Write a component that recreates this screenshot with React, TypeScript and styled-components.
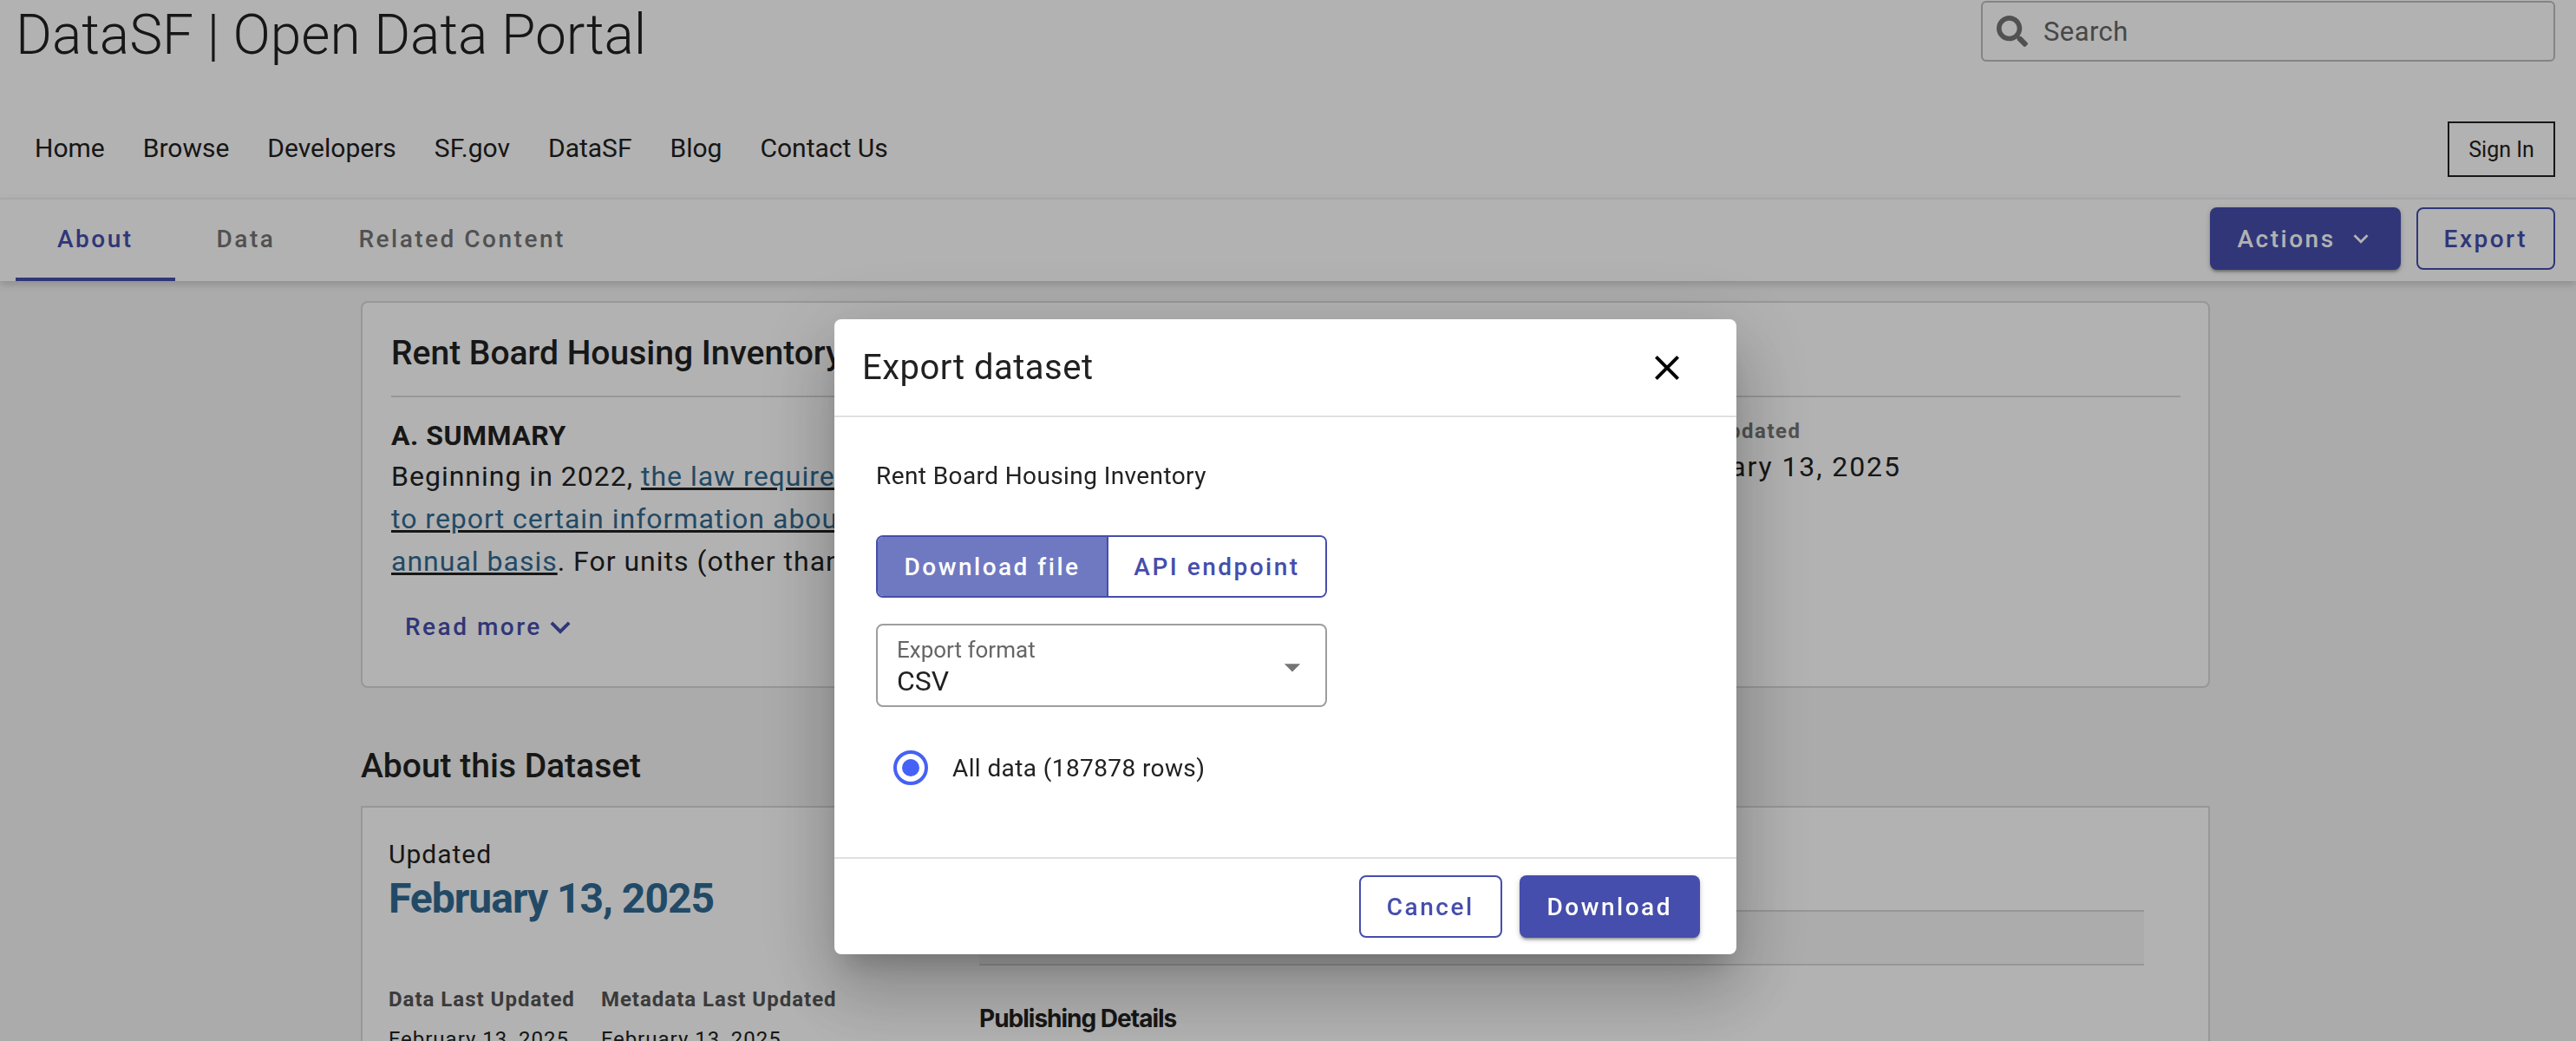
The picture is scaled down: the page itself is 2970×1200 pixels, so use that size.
import React from 'react';
import styled, { createGlobalStyle } from 'styled-components';
import { FaSearch } from 'react-icons/fa';
import { MdArrowDropDown, MdClose, MdExpandMore } from 'react-icons/md';

const GlobalStyle = createGlobalStyle`
  html, body {
    margin: 0;
    height: 1200px;
    overflow: hidden;
    background: #f5f5f5;
    font-family: Roboto, "Liberation Sans", sans-serif;
    color: #212121;
  }
  * { box-sizing: border-box; }
`;

const Page = styled.div`
  width: 2970px;
  height: 1200px;
  overflow: hidden;
`;

const Header = styled.header`
  height: 228px;
  background: #fff;
  padding: 1px 24px 0 18px;
`;

const TitleRow = styled.div`
  display: flex;
  justify-content: space-between;
  height: 137px;
`;

const SiteTitle = styled.h1`
  margin: 0;
  font-size: 64px;
  line-height: 80px;
  font-weight: 300;
  letter-spacing: 0;
`;

const SearchBox = styled.div`
  width: 662px;
  height: 70px;
  border: 2px solid #bdbdbd;
  border-radius: 6px;
  display: flex;
  align-items: center;
  gap: 18px;
  padding: 0 16px;
  font-size: 31px;
  letter-spacing: 0.4px;
  color: #666;
  svg { font-size: 36px; color: #757575; }
`;

const NavRow = styled.div`
  display: flex;
  justify-content: space-between;
  align-items: center;
  height: 64px;
  padding-left: 22px;
`;

const NavList = styled.nav`
  display: flex;
  gap: 44px;
  font-size: 30px;
`;

const SignIn = styled.button`
  width: 124px;
  height: 64px;
  background: transparent;
  border: 2px solid #212121;
  font: 400 25px Roboto, sans-serif;
  color: #212121;
  padding: 0;
  margin-top: 4px;
`;

const TabBar = styled.div`
  height: 96px;
  background: #fff;
  border-top: 2px solid #f0f0f0;
  box-shadow: 0 4px 8px rgba(0, 0, 0, 0.16);
  position: relative;
  display: flex;
  justify-content: space-between;
  padding: 0 24px 0 18px;
`;

const Tabs = styled.div`
  display: flex;
`;

const Tab = styled.div<{ $active?: boolean }>`
  padding: 0 48px;
  height: 94px;
  display: flex;
  align-items: center;
  font-size: 28px;
  font-weight: 500;
  letter-spacing: 2.5px;
  color: ${(p) => (p.$active ? '#454eac' : '#757575')};
  border-bottom: 4px solid ${(p) => (p.$active ? '#454eac' : 'transparent')};
`;

const TabActions = styled.div`
  display: flex;
  gap: 18px;
  padding-top: 9px;
`;

const PrimaryButton = styled.button`
  height: 72px;
  padding: 0 32px;
  display: flex;
  align-items: center;
  gap: 12px;
  background: #454eac;
  color: #fff;
  border: 0;
  border-radius: 8px;
  font: 500 28px Roboto, sans-serif;
  letter-spacing: 2.5px;
  box-shadow: 0 3px 3px -1px rgba(0, 0, 0, 0.3), 0 2px 6px rgba(0, 0, 0, 0.2);
  svg { font-size: 34px; margin-right: -3px; }
`;

const OutlineButton = styled.button`
  height: 72px;
  padding: 0 30px;
  background: #fff;
  color: #454eac;
  border: 2px solid #454eac;
  border-radius: 8px;
  font: 500 28px Roboto, sans-serif;
  letter-spacing: 2.5px;
`;

const Main = styled.main`
  padding: 23px 422px 0 416px;
`;

const SummaryCard = styled.section`
  height: 446px;
  background: #fff;
  border: 2px solid #d8d8d8;
  border-radius: 8px;
  padding: 28px 32px 0 33px;
`;

const CardTitle = styled.h2`
  margin: 0;
  height: 81px;
  font-size: 39px;
  line-height: 60px;
  font-weight: 500;
  border-bottom: 2px solid #d8d8d8;
`;

const SummaryBody = styled.div`
  display: flex;
  justify-content: space-between;
  padding-top: 21px;
`;

const SummaryText = styled.div`
  font-size: 32px;
  line-height: 49px;
  letter-spacing: 1px;
  font-weight: 400;
  white-space: nowrap;
`;

const SummaryHeading = styled.div`
  font-weight: 700;
  letter-spacing: 0.5px;
  line-height: 46px;
`;

const BodyLink = styled.a`
  color: #316a92;
  text-decoration: underline;
  text-decoration-color: #212121;
`;

const ReadMore = styled.div`
  margin: 26px 0 0 16px;
  display: flex;
  align-items: center;
  color: #454eac;
  font-size: 28px;
  font-weight: 500;
  letter-spacing: 2.5px;
  svg { font-size: 46px; margin-left: -2px; }
`;

const SideFacts = styled.div`
  width: 609px;
`;

const SideLabel = styled.div`
  font-size: 24px;
  line-height: 36px;
  font-weight: 700;
  letter-spacing: 1.5px;
  color: #757575;
  padding-left: 11px;
`;

const SideValue = styled.div`
  font-size: 32px;
  line-height: 46px;
  letter-spacing: 1.9px;
`;

const SectionTitle = styled.h2`
  margin: 68px 0 24px;
  font-size: 39px;
  line-height: 44px;
  font-weight: 500;
`;

const AboutCard = styled.section`
  height: 400px;
  background: #fff;
  border: 2px solid #d8d8d8;
  padding: 32px 32px 0 30px;
  display: grid;
  grid-template-columns: 681px 1343px;
`;

const UpdatedLabel = styled.div`
  font-size: 30px;
  line-height: 44px;
  letter-spacing: 1px;
`;

const UpdatedValue = styled.div`
  font-size: 48px;
  line-height: 58px;
  font-weight: 700;
  letter-spacing: -1px;
  color: #316a92;
`;

const MetaRow = styled.div`
  display: flex;
  gap: 30px;
  margin-top: 70px;
`;

const MetaLabel = styled.div`
  font-size: 24px;
  font-weight: 700;
  letter-spacing: 1px;
  line-height: 34px;
  color: #555;
`;

const MetaValue = styled.div`
  font-size: 24px;
  letter-spacing: 1px;
  line-height: 34px;
  margin-top: 12px;
`;

const TableStub = styled.div`
  height: 64px;
  margin-top: 86px;
  background: #f7f7f7;
  border-top: 2px solid #d8d8d8;
  border-bottom: 2px solid #d8d8d8;
`;

const PublishingHeading = styled.div`
  margin-top: 44px;
  font-family: Inter, Roboto, sans-serif;
  font-size: 28px;
  font-weight: 700;
  letter-spacing: -1px;
`;

const Backdrop = styled.div`
  position: fixed;
  inset: 0;
  background: rgba(0, 0, 0, 0.3);
  padding: 368px 968px 0 962px;
`;

const Modal = styled.div`
  width: 1040px;
  height: 732px;
  background: #fff;
  border-radius: 8px;
  box-shadow: 0 22px 30px -14px rgba(0, 0, 0, 0.2), 0 48px 76px 6px rgba(0, 0, 0, 0.14), 0 18px 92px 16px rgba(0, 0, 0, 0.12);
  display: flex;
  flex-direction: column;
`;

const ModalHeader = styled.div`
  height: 113px;
  border-bottom: 2px solid #e0e0e0;
  display: flex;
  justify-content: space-between;
  align-items: center;
  padding: 0 56px 0 32px;
`;

const ModalTitle = styled.h2`
  margin: 0;
  font-size: 40px;
  font-weight: 400;
  letter-spacing: 0.5px;
`;

const CloseIcon = styled(MdClose)`
  font-size: 48px;
  color: #000;
`;

const ModalBody = styled.div`
  flex: 1;
  padding: 50px 48px 0;
`;

const DatasetName = styled.div`
  font-size: 28px;
  line-height: 36px;
  letter-spacing: 0.4px;
`;

const Toggle = styled.div`
  display: flex;
  width: 520px;
  height: 72px;
  margin-top: 50px;
  border: 2px solid #454eac;
  border-radius: 8px;
  overflow: hidden;
`;

const ToggleOption = styled.div<{ $active?: boolean }>`
  flex: ${(p) => (p.$active ? '0 0 266px' : '1')};
  display: flex;
  align-items: center;
  justify-content: center;
  font-size: 28px;
  font-weight: 500;
  letter-spacing: 2.5px;
  background: ${(p) => (p.$active ? '#6f79c2' : '#fff')};
  color: ${(p) => (p.$active ? '#fff' : '#454eac')};
  border-right: ${(p) => (p.$active ? '2px solid #454eac' : '0')};
`;

const SelectField = styled.div`
  width: 520px;
  height: 96px;
  margin-top: 30px;
  border: 2px solid #9e9e9e;
  border-radius: 8px;
  padding: 12px 22px 0;
  position: relative;
`;

const SelectLabel = styled.div`
  font-size: 26px;
  line-height: 32px;
  color: #666;
`;

const SelectValue = styled.div`
  font-size: 32px;
  line-height: 40px;
`;

const SelectCaret = styled(MdArrowDropDown)`
  position: absolute;
  right: 16px;
  top: 26px;
  font-size: 44px;
  color: #757575;
`;

const RadioRow = styled.div`
  display: flex;
  align-items: center;
  gap: 28px;
  margin-top: 50px;
  padding-left: 20px;
  font-size: 28px;
  letter-spacing: 0.4px;
`;

const RadioMark = styled.span`
  width: 40px;
  height: 40px;
  border-radius: 50%;
  border: 4px solid #4661f5;
  display: flex;
  align-items: center;
  justify-content: center;
  &::after {
    content: '';
    width: 20px;
    height: 20px;
    border-radius: 50%;
    background: #4661f5;
  }
`;

const ModalFooter = styled.div`
  height: 112px;
  border-top: 2px solid #e0e0e0;
  display: flex;
  justify-content: flex-end;
  align-items: flex-start;
  gap: 20px;
  padding: 19px 42px 0 0;
`;

const sideDate = 'February 13, 2025';

const App: React.FC = () => (
  <Page>
    <GlobalStyle />
    <Header>
      <TitleRow>
        <SiteTitle>DataSF | Open Data Portal</SiteTitle>
        <SearchBox>
          <FaSearch />
          Search
        </SearchBox>
      </TitleRow>
      <NavRow>
        <NavList>
          {['Home', 'Browse', 'Developers', 'SF.gov', 'DataSF', 'Blog', 'Contact Us'].map((item) => (
            <span key={item}>{item}</span>
          ))}
        </NavList>
        <SignIn>Sign In</SignIn>
      </NavRow>
    </Header>
    <TabBar>
      <Tabs>
        <Tab $active>About</Tab>
        <Tab>Data</Tab>
        <Tab>Related Content</Tab>
      </Tabs>
      <TabActions>
        <PrimaryButton>
          Actions
          <MdExpandMore />
        </PrimaryButton>
        <OutlineButton>Export</OutlineButton>
      </TabActions>
    </TabBar>
    <Main>
      <SummaryCard>
        <CardTitle>Rent Board Housing Inventory</CardTitle>
        <SummaryBody>
          <SummaryText>
            <SummaryHeading>A. SUMMARY</SummaryHeading>
            Beginning in 2022,
            {' '}
            <BodyLink>the law requires owners</BodyLink>
            <br />
            <BodyLink>to report certain information about</BodyLink>
            <br />
            <BodyLink>annual basis</BodyLink>
            . For units (other than
            <ReadMore>
              Read more
              <MdExpandMore />
            </ReadMore>
          </SummaryText>
          <SideFacts>
            <SideLabel>Last Updated</SideLabel>
            <SideValue>{sideDate}</SideValue>
          </SideFacts>
        </SummaryBody>
      </SummaryCard>
      <SectionTitle>About this Dataset</SectionTitle>
      <AboutCard>
        <div>
          <UpdatedLabel>Updated</UpdatedLabel>
          <UpdatedValue>{sideDate}</UpdatedValue>
          <MetaRow>
            <div>
              <MetaLabel>Data Last Updated</MetaLabel>
              <MetaValue>{sideDate}</MetaValue>
            </div>
            <div>
              <MetaLabel>Metadata Last Updated</MetaLabel>
              <MetaValue>{sideDate}</MetaValue>
            </div>
          </MetaRow>
        </div>
        <div>
          <TableStub />
          <PublishingHeading>Publishing Details</PublishingHeading>
        </div>
      </AboutCard>
    </Main>
    <Backdrop>
      <Modal>
        <ModalHeader>
          <ModalTitle>Export dataset</ModalTitle>
          <CloseIcon />
        </ModalHeader>
        <ModalBody>
          <DatasetName>Rent Board Housing Inventory</DatasetName>
          <Toggle>
            <ToggleOption $active>Download file</ToggleOption>
            <ToggleOption>API endpoint</ToggleOption>
          </Toggle>
          <SelectField>
            <SelectLabel>Export format</SelectLabel>
            <SelectValue>CSV</SelectValue>
            <SelectCaret />
          </SelectField>
          <RadioRow>
            <RadioMark />
            All data (187878 rows)
          </RadioRow>
        </ModalBody>
        <ModalFooter>
          <OutlineButton>Cancel</OutlineButton>
          <PrimaryButton>Download</PrimaryButton>
        </ModalFooter>
      </Modal>
    </Backdrop>
  </Page>
);

export default App;
